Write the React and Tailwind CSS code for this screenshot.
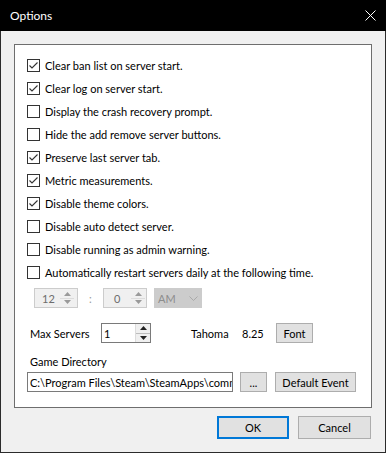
import React from "react";

const font = { fontFamily: 'Lato, "Noto Sans", sans-serif' };

function Check({ checked }) {
  return (
    <div className="w-[13px] h-[13px] border border-[#333333] bg-white flex items-center justify-center shrink-0">
      {checked && (
        <svg width="11" height="11" viewBox="0 0 11 11">
          <path d="M1.5 5.5 L4 8 L9.5 2.5" fill="none" stroke="#333333" strokeWidth="1.1" />
        </svg>
      )}
    </div>
  );
}

function Arrows({ color, bg, border }) {
  return (
    <div className={`flex flex-col w-[14px] h-full ${bg}`}>
      <div className={`flex-1 flex items-center justify-center border-b ${border}`}>
        <svg width="7" height="4" viewBox="0 0 7 4"><path d="M0 4 L3.5 0 L7 4 Z" fill={color} /></svg>
      </div>
      <div className="flex-1 flex items-center justify-center">
        <svg width="7" height="4" viewBox="0 0 7 4"><path d="M0 0 L3.5 4 L7 0 Z" fill={color} /></svg>
      </div>
    </div>
  );
}

const items = [
  ["Clear ban list on server start.", true],
  ["Clear log on server start.", true],
  ["Display the crash recovery prompt.", false],
  ["Hide the add remove server buttons.", false],
  ["Preserve last server tab.", true],
  ["Metric measurements.", true],
  ["Disable theme colors.", true],
  ["Disable auto detect server.", false],
  ["Disable running as admin warning.", false],
  ["Automatically restart servers daily at the following time.", false],
];

export default function App() {
  return (
    <div style={font} className="w-[386px] h-[453px] bg-[#f0f0f0] border-x border-b border-[#2b2b2b] flex flex-col text-[11px] text-black leading-none">
      <div className="h-[31px] bg-black -mx-px flex items-center justify-between pl-[10px] pr-[10px] text-white shrink-0">
        <span className="text-[12px]">Options</span>
        <svg width="11" height="11" viewBox="0 0 11 11">
          <path d="M0.5 0.5 L10.5 10.5 M10.5 0.5 L0.5 10.5" stroke="white" strokeWidth="1" />
        </svg>
      </div>
      <div className="flex-1 flex flex-col px-[13px] pt-[13px]">
        <div className="h-[364px] border border-[#6e6e6e] bg-white flex flex-col pt-[9px] pl-[12px]">
          {items.map(([label, checked]) => (
            <div key={label} className="h-[23px] flex items-center gap-[5px]">
              <Check checked={checked} />
              <span className="whitespace-nowrap">{label}</span>
            </div>
          ))}
          <div className="mt-[4px] h-[20px] flex items-center pl-[7px]">
            <div className="w-[44px] h-[20px] border border-[#cccccc] bg-[#f0f0f0] flex items-center">
              <span className="flex-1 pl-[7px] text-[#6d6d6d]">12</span>
              <div className="h-[18px] py-px pr-[3px]"><Arrows color="#9a9a9a" bg="bg-[#f0f0f0]" border="border-[#dcdcdc]" /></div>
            </div>
            <span className="w-[25px] text-center text-[#9a9a9a]">:</span>
            <div className="w-[44px] h-[20px] border border-[#cccccc] bg-[#f0f0f0] flex items-center">
              <span className="flex-1 pl-[10px] text-[#6d6d6d]">0</span>
              <div className="h-[18px] py-px pr-[1px]"><Arrows color="#9a9a9a" bg="bg-[#f0f0f0]" border="border-[#dcdcdc]" /></div>
            </div>
            <div className="ml-[7px] w-[48px] h-[20px] bg-[#cccccc] flex items-center justify-between px-[4px] text-[#8d8d8d]">
              <span>AM</span>
              <svg width="9" height="5" viewBox="0 0 9 5"><path d="M0.5 0.5 L4.5 4.5 L8.5 0.5" fill="none" stroke="#a9a9a9" strokeWidth="1" /></svg>
            </div>
          </div>
          <div className="mt-[15px] h-[20px] flex items-center">
            <span className="w-[74px] pl-[3px] whitespace-nowrap">Max Servers</span>
            <div className="w-[50px] h-[20px] border border-[#7a7a7a] bg-white flex items-center">
              <span className="flex-1 pl-[2px]">1</span>
              <div className="h-[18px] w-[15px] border-l border-[#dcdcdc]"><Arrows color="#222" bg="bg-[#f0f0f0]" border="border-[#bdbdbd]" /></div>
            </div>
            <span className="ml-[40px] w-[51px]">Tahoma</span>
            <span className="w-[34px]">8.25</span>
            <button className="w-[37px] h-[20px] bg-[#e1e1e1] border border-[#adadad] flex items-center justify-center">Font</button>
          </div>
          <div className="mt-[11px] h-[14px] flex items-center pl-[3px]">Game Directory</div>
          <div className="mt-[4px] h-[20px] flex items-center">
            <input
              readOnly
              value="C:\Program Files\Steam\SteamApps\common\ARK"
              className="w-[206px] h-[20px] border border-[#7a7a7a] bg-white pl-[2px] text-[11px] text-black outline-none shrink-0"
              style={font}
            />
            <button className="ml-[7px] w-[27px] h-[20px] bg-[#e1e1e1] border border-[#adadad] flex items-center justify-center shrink-0">...</button>
            <button className="ml-[8px] w-[81px] h-[20px] bg-[#e1e1e1] border border-[#adadad] flex items-center justify-center shrink-0 whitespace-nowrap">Default Event</button>
          </div>
        </div>
        <div className="mt-[8px] flex justify-end gap-[9px] pr-[1px]">
          <button className="w-[72px] h-[23px] bg-[#e1e1e1] border-2 border-[#0078d7] flex items-center justify-center">OK</button>
          <button className="w-[73px] h-[23px] bg-[#e1e1e1] border border-[#adadad] flex items-center justify-center">Cancel</button>
        </div>
      </div>
    </div>
  );
}
